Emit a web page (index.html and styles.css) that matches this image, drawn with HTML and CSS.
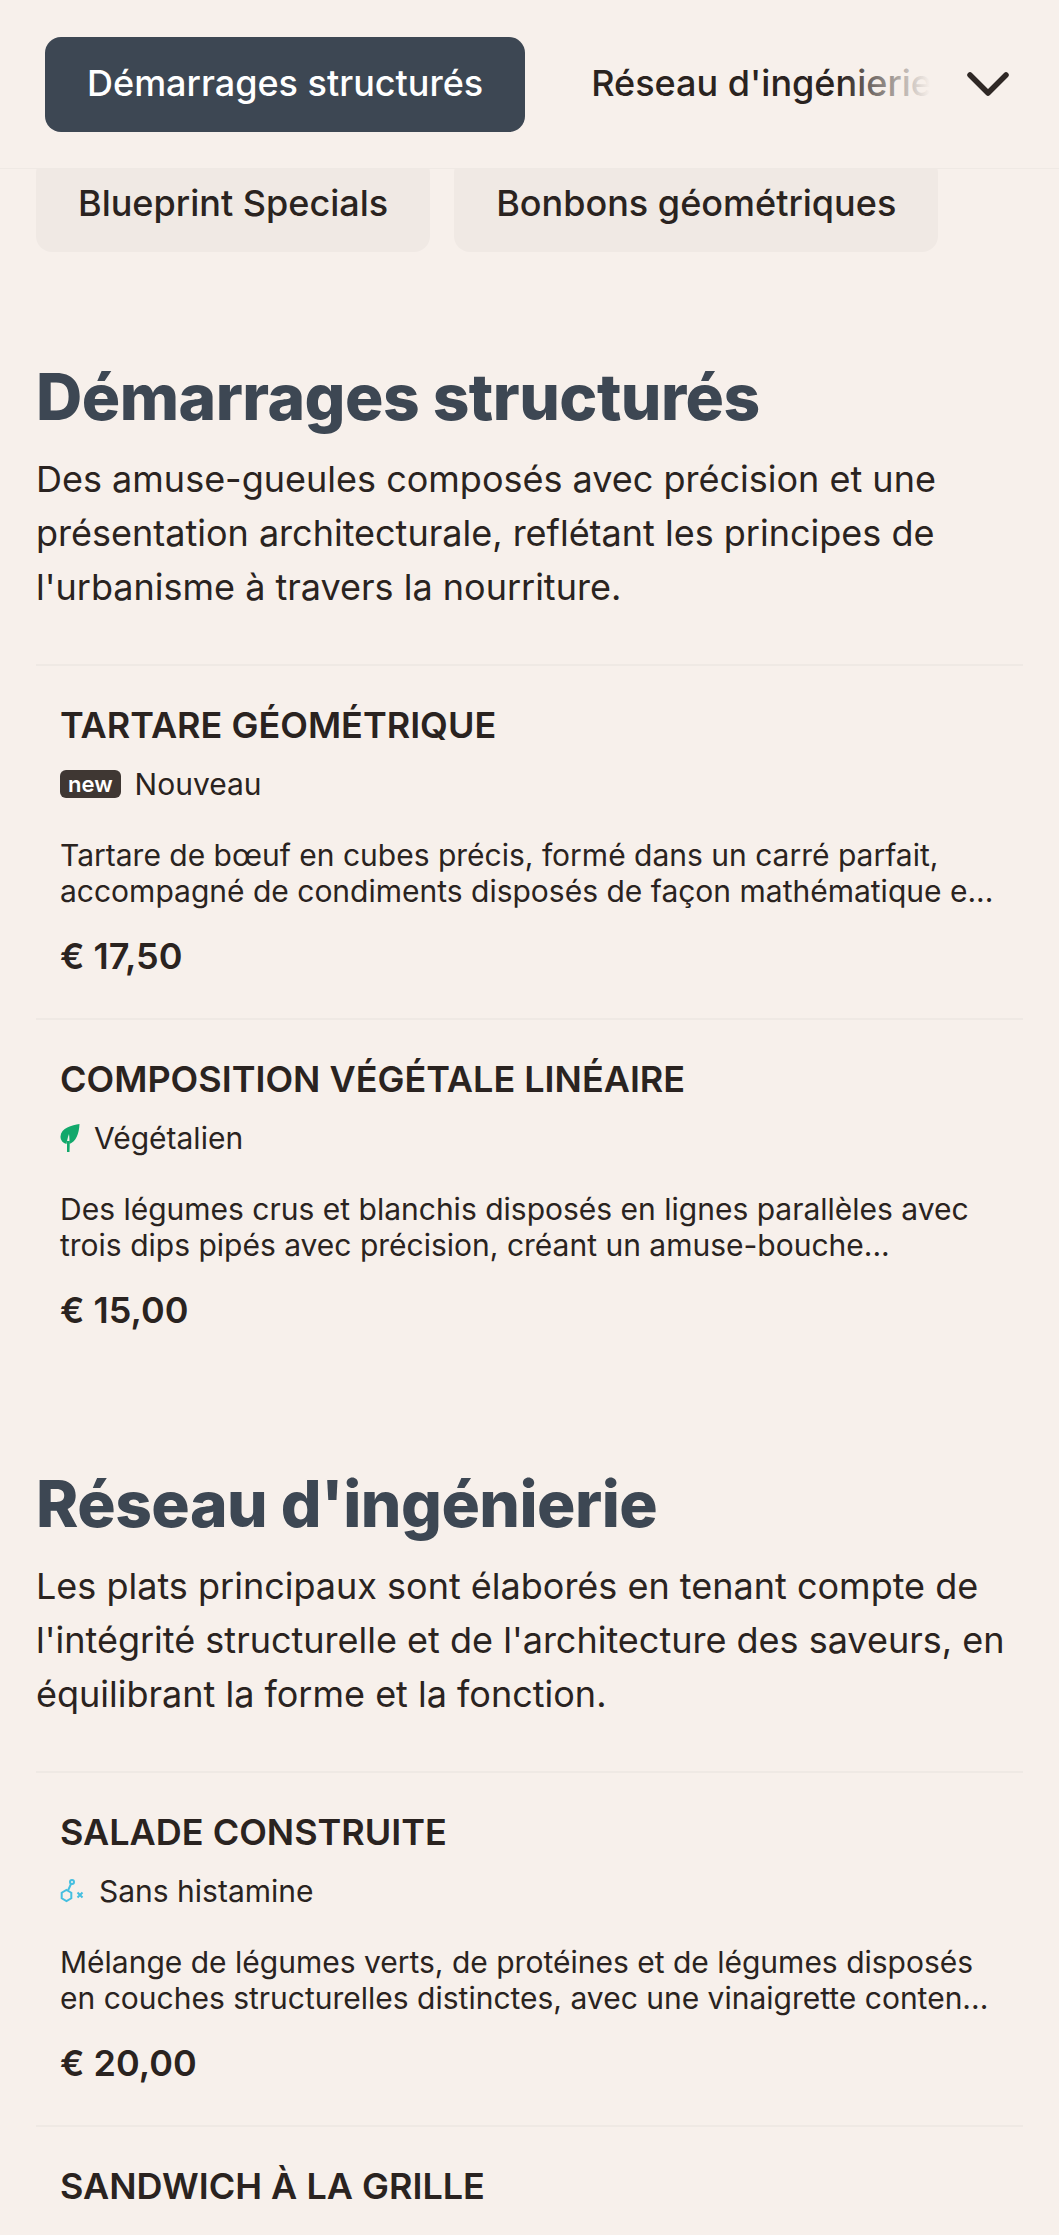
FILE: index.html
```html
<!DOCTYPE html>
<html lang="fr">
<head>
    <meta charset="UTF-8">
    <meta name="viewport" content="width=device-width, initial-scale=1.0">
    <title>Menu</title>
    <link rel="stylesheet" href="styles.css">
</head>
<body>
    <header class="topbar">
        <div class="topbar-tabs">
            <a class="tab tab-active">Démarrages structurés</a>
            <a class="tab tab-cut">Réseau d'ingénierie</a>
        </div>
        <svg class="chevron" viewBox="0 0 42 26" width="42" height="26" fill="none" stroke="#2f2825" stroke-width="5.5" stroke-linecap="round" stroke-linejoin="round">
            <path d="M3 4 L21 22 L39 4"/>
        </svg>
    </header>

    <div class="subtabs">
        <a class="tab tab-muted">Blueprint Specials</a>
        <a class="tab tab-muted">Bonbons géométriques</a>
    </div>

    <section class="section">
        <h2>Démarrages structurés</h2>
        <p class="intro">Des amuse-gueules composés avec précision et une présentation architecturale, reflétant les principes de l'urbanisme à travers la nourriture.</p>

        <article class="item">
            <h3>TARTARE GÉOMÉTRIQUE</h3>
            <div class="tag"><span class="badge-new">new</span>Nouveau</div>
            <p class="desc">Tartare de bœuf en cubes précis, formé dans un carré parfait, accompagné de condiments disposés de façon mathématique e...</p>
            <div class="price">€ 17,50</div>
        </article>

        <article class="item">
            <h3>COMPOSITION VÉGÉTALE LINÉAIRE</h3>
            <div class="tag">
                <svg class="icon-leaf" viewBox="0 0 20 28" width="20" height="28">
                    <path fill="#12a86b" d="M19.500 0 C12 1 1 4 0.500 12.500 C0.500 16.500 3 19 6.500 20 C7 17 7.500 14 9 10 C9.500 14 9.500 17 9.500 20 C16 17.500 19 10 19.500 0 Z"/>
                    <path fill="#12a86b" d="M7 17 L9.800 17 L9.500 28 L7 28 Z"/>
                </svg>
                Végétalien
            </div>
            <p class="desc">Des légumes crus et blanchis disposés en lignes parallèles avec trois dips pipés avec précision, créant un amuse-bouche...</p>
            <div class="price">€ 15,00</div>
        </article>
    </section>

    <section class="section">
        <h2>Réseau d'ingénierie</h2>
        <p class="intro">Les plats principaux sont élaborés en tenant compte de l'intégrité structurelle et de l'architecture des saveurs, en équilibrant la forme et la fonction.</p>

        <article class="item">
            <h3>SALADE CONSTRUITE</h3>
            <div class="tag">
                <svg class="icon-hist" viewBox="0 0 25 25" width="25" height="25" fill="none" stroke="#45bfe0" stroke-width="2">
                    <circle cx="12" cy="3" r="2"/>
                    <path d="M11 5 L8 11.500"/>
                    <path d="M6.500 11 L11.300 13.750 L11.300 19.250 L6.500 22 L1.700 19.250 L1.700 13.750 Z"/>
                    <path d="M17.500 13.500 L22.500 18.500 M22.500 13.500 L17.500 18.500"/>
                </svg>
                Sans histamine
            </div>
            <p class="desc">Mélange de légumes verts, de protéines et de légumes disposés en couches structurelles distinctes, avec une vinaigrette conten...</p>
            <div class="price">€ 20,00</div>
        </article>

        <article class="item">
            <h3>SANDWICH À LA GRILLE</h3>
            <div class="tag tag-last">
                <svg class="icon-egg" viewBox="0 0 25 25" width="25" height="25">
                    <ellipse cx="15" cy="13" rx="9" ry="12" fill="#f2d64b"/>
                </svg>
                Sans œuf
            </div>
        </article>
    </section>
</body>
</html>
```
FILE: styles.css
```css
html, body {
    margin: 0;
    height: 100vh;
    overflow: hidden;
}

body {
    font-family: Inter, "Liberation Sans", sans-serif;
    background-color: #f7f0eb;
    color: #2a2320;
}

h2, h3, p {
    margin: 0;
}

.topbar {
    position: sticky;
    top: 0;
    z-index: 2;
    height: 168px;
    display: flex;
    align-items: center;
    justify-content: space-between;
    padding: 0 50px 0 45px;
    background-color: #f7f0eb;
    border-bottom: 1px solid #efe9e4;
}

.topbar-tabs {
    display: flex;
    align-items: center;
    gap: 24px;
    width: 885px;
    overflow: hidden;
    position: relative;
}

.topbar-tabs::after {
    content: "";
    position: absolute;
    top: 0;
    right: 0;
    bottom: 0;
    width: 90px;
    background: linear-gradient(to right, rgba(247, 240, 235, 0), #f7f0eb);
}

.tab {
    flex: none;
    display: block;
    height: 95px;
    line-height: 93px;
    padding: 0 42px;
    box-sizing: border-box;
    font-size: 36px;
    font-weight: 500;
    border-radius: 16px;
}

.tab-active {
    background-color: #3d4753;
    color: #fff;
}

.tab-muted {
    background-color: #f0e9e4;
}

.subtabs {
    display: flex;
    gap: 24px;
    margin-top: -12px;
    padding-left: 36px;
}

.section {
    padding: 0 36px;
    margin-bottom: 89px;
}

.subtabs + .section {
    margin-top: 102px;
}

h2 {
    font-size: 64px;
    line-height: 86px;
    font-weight: 800;
    letter-spacing: -0.5px;
    color: #3d4753;
}

.intro {
    font-size: 36px;
    line-height: 54px;
    margin-top: 12px;
    margin-bottom: 50px;
}

.item {
    padding: 36px 24px 39px;
    border-top: 2px solid #efe9e4;
}

h3 {
    font-size: 36px;
    line-height: 46px;
    font-weight: 600;
}

.tag {
    display: flex;
    align-items: center;
    gap: 14px;
    font-size: 30px;
    line-height: 40px;
    margin-top: 16px;
}

.tag-last {
    margin-top: 19px;
}

.badge-new {
    background-color: #3f3733;
    color: #fff;
    font-size: 22px;
    font-weight: 600;
    line-height: 28px;
    padding: 0 8px;
    border-radius: 6px;
}

.desc {
    font-size: 30px;
    line-height: 36px;
    margin-top: 33px;
}

.price {
    font-size: 36px;
    line-height: 46px;
    font-weight: 600;
    margin-top: 24px;
}
```
